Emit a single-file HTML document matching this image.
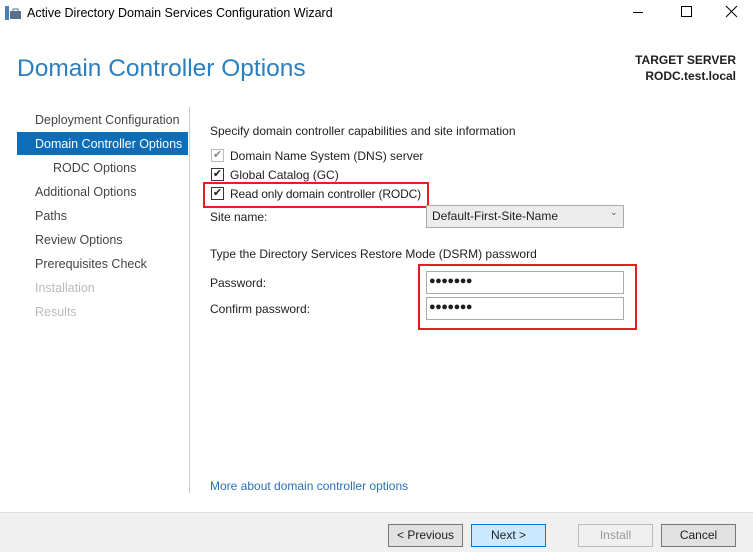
<!DOCTYPE html>
<html><head><style>
body{margin:0;width:753px;height:551px;background:#fff;font-family:"Liberation Sans",sans-serif;font-size:12px;color:#1e1e1e;position:relative;overflow:hidden}
.a{position:absolute;white-space:nowrap}
.nav{left:35px;color:#444;font-size:12.5px}
.cb{position:absolute;width:11px;height:11px;border:1px solid #333;background:#fff;font-size:11px;line-height:11px;text-align:center}
.inp{position:absolute;border:1px solid #aaa;background:#fff;height:21px}
.btn{position:absolute;top:524px;height:21px;width:73px;border:1px solid #777;background:#e1e1e1;text-align:center;line-height:21px;font-size:12px}
</style></head><body>
<svg class="a" style="left:5px;top:6px" width="16" height="14"><rect x="0" y="0" width="4" height="14" fill="#4a7fbf"/><rect x="5" y="5" width="11" height="8" fill="#5b6f8a"/><rect x="8" y="3" width="5" height="3" fill="none" stroke="#5b6f8a"/></svg>
<div class="a" style="left:27px;top:6px;font-size:12.5px;color:#000">Active Directory Domain Services Configuration Wizard</div>
<svg class="a" style="left:630px;top:5px" width="110" height="14"><line x1="3" y1="7.5" x2="13" y2="7.5" stroke="#000"/><rect x="51.5" y="1.5" width="10" height="10" fill="none" stroke="#000"/><path d="M96 1L107 12M107 1L96 12" stroke="#000"/></svg>
<div class="a" style="left:17px;top:55px;font-size:24.5px;color:#2a7fc0">Domain Controller Options</div>
<div class="a" style="right:17px;top:52px;text-align:right;font-weight:bold;font-size:12px;line-height:16px">TARGET SERVER<br>RODC.test.local</div>
<div class="a" style="left:189px;top:107px;width:1px;height:386px;background:#ccc"></div>
<div class="a nav" style="top:113px">Deployment Configuration</div>
<div class="a" style="left:17px;top:132px;width:171px;height:23px;background:#0c6eb8"></div>
<div class="a nav" style="top:137px;color:#fff">Domain Controller Options</div>
<div class="a nav" style="top:161px;left:53px">RODC Options</div>
<div class="a nav" style="top:185px">Additional Options</div>
<div class="a nav" style="top:209px">Paths</div>
<div class="a nav" style="top:233px">Review Options</div>
<div class="a nav" style="top:257px">Prerequisites Check</div>
<div class="a nav" style="top:281px;color:#bbb">Installation</div>
<div class="a nav" style="top:305px;color:#bbb">Results</div>
<div class="a" style="left:210px;top:124px">Specify domain controller capabilities and site information</div>
<div class="cb" style="left:211px;top:149px;border-color:#bbb;color:#888">✔</div>
<div class="a" style="left:230px;top:149px">Domain Name System (DNS) server</div>
<div class="cb" style="left:211px;top:168px">✔</div>
<div class="a" style="left:230px;top:168px">Global Catalog (GC)</div>
<div class="cb" style="left:211px;top:187px">✔</div>
<div class="a" style="left:230px;top:187px;letter-spacing:-0.15px">Read only domain controller (RODC)</div>
<div class="a" style="left:203px;top:182px;width:222px;height:22px;border:2px solid #e81c24"></div>
<div class="a" style="left:210px;top:210px">Site name:</div>
<div class="inp" style="left:426px;top:205px;width:196px;background:#ececec"></div>
<div class="a" style="left:432px;top:209px">Default-First-Site-Name</div>
<div class="a" style="left:610px;top:207px;font-size:9px;color:#555">⌄</div>
<div class="a" style="left:210px;top:247px">Type the Directory Services Restore Mode (DSRM) password</div>
<div class="a" style="left:210px;top:276px">Password:</div>
<div class="a" style="left:210px;top:302px">Confirm password:</div>
<div class="inp" style="left:426px;top:271px;width:196px"></div>
<div class="inp" style="left:426px;top:297px;width:196px"></div>
<div class="a" style="left:429px;top:275px;font-size:11px;letter-spacing:-0.5px">●●●●●●●</div>
<div class="a" style="left:429px;top:301px;font-size:11px;letter-spacing:-0.5px">●●●●●●●</div>
<div class="a" style="left:418px;top:264px;width:215px;height:62px;border:2px solid #e81c24"></div>
<div class="a" style="left:210px;top:479px;color:#2a6fb8">More about domain controller options</div>
<div class="a" style="left:0;top:512px;width:753px;height:39px;background:#f0f0f0;border-top:1px solid #ddd"></div>
<div class="btn" style="left:388px">&lt; Previous</div>
<div class="btn" style="left:471px;background:#cce8ff;border-color:#0078d7">Next &gt;</div>
<div class="btn" style="left:578px;background:#f0f0f0;border-color:#bbb;color:#999">Install</div>
<div class="btn" style="left:661px">Cancel</div>
</body></html>
